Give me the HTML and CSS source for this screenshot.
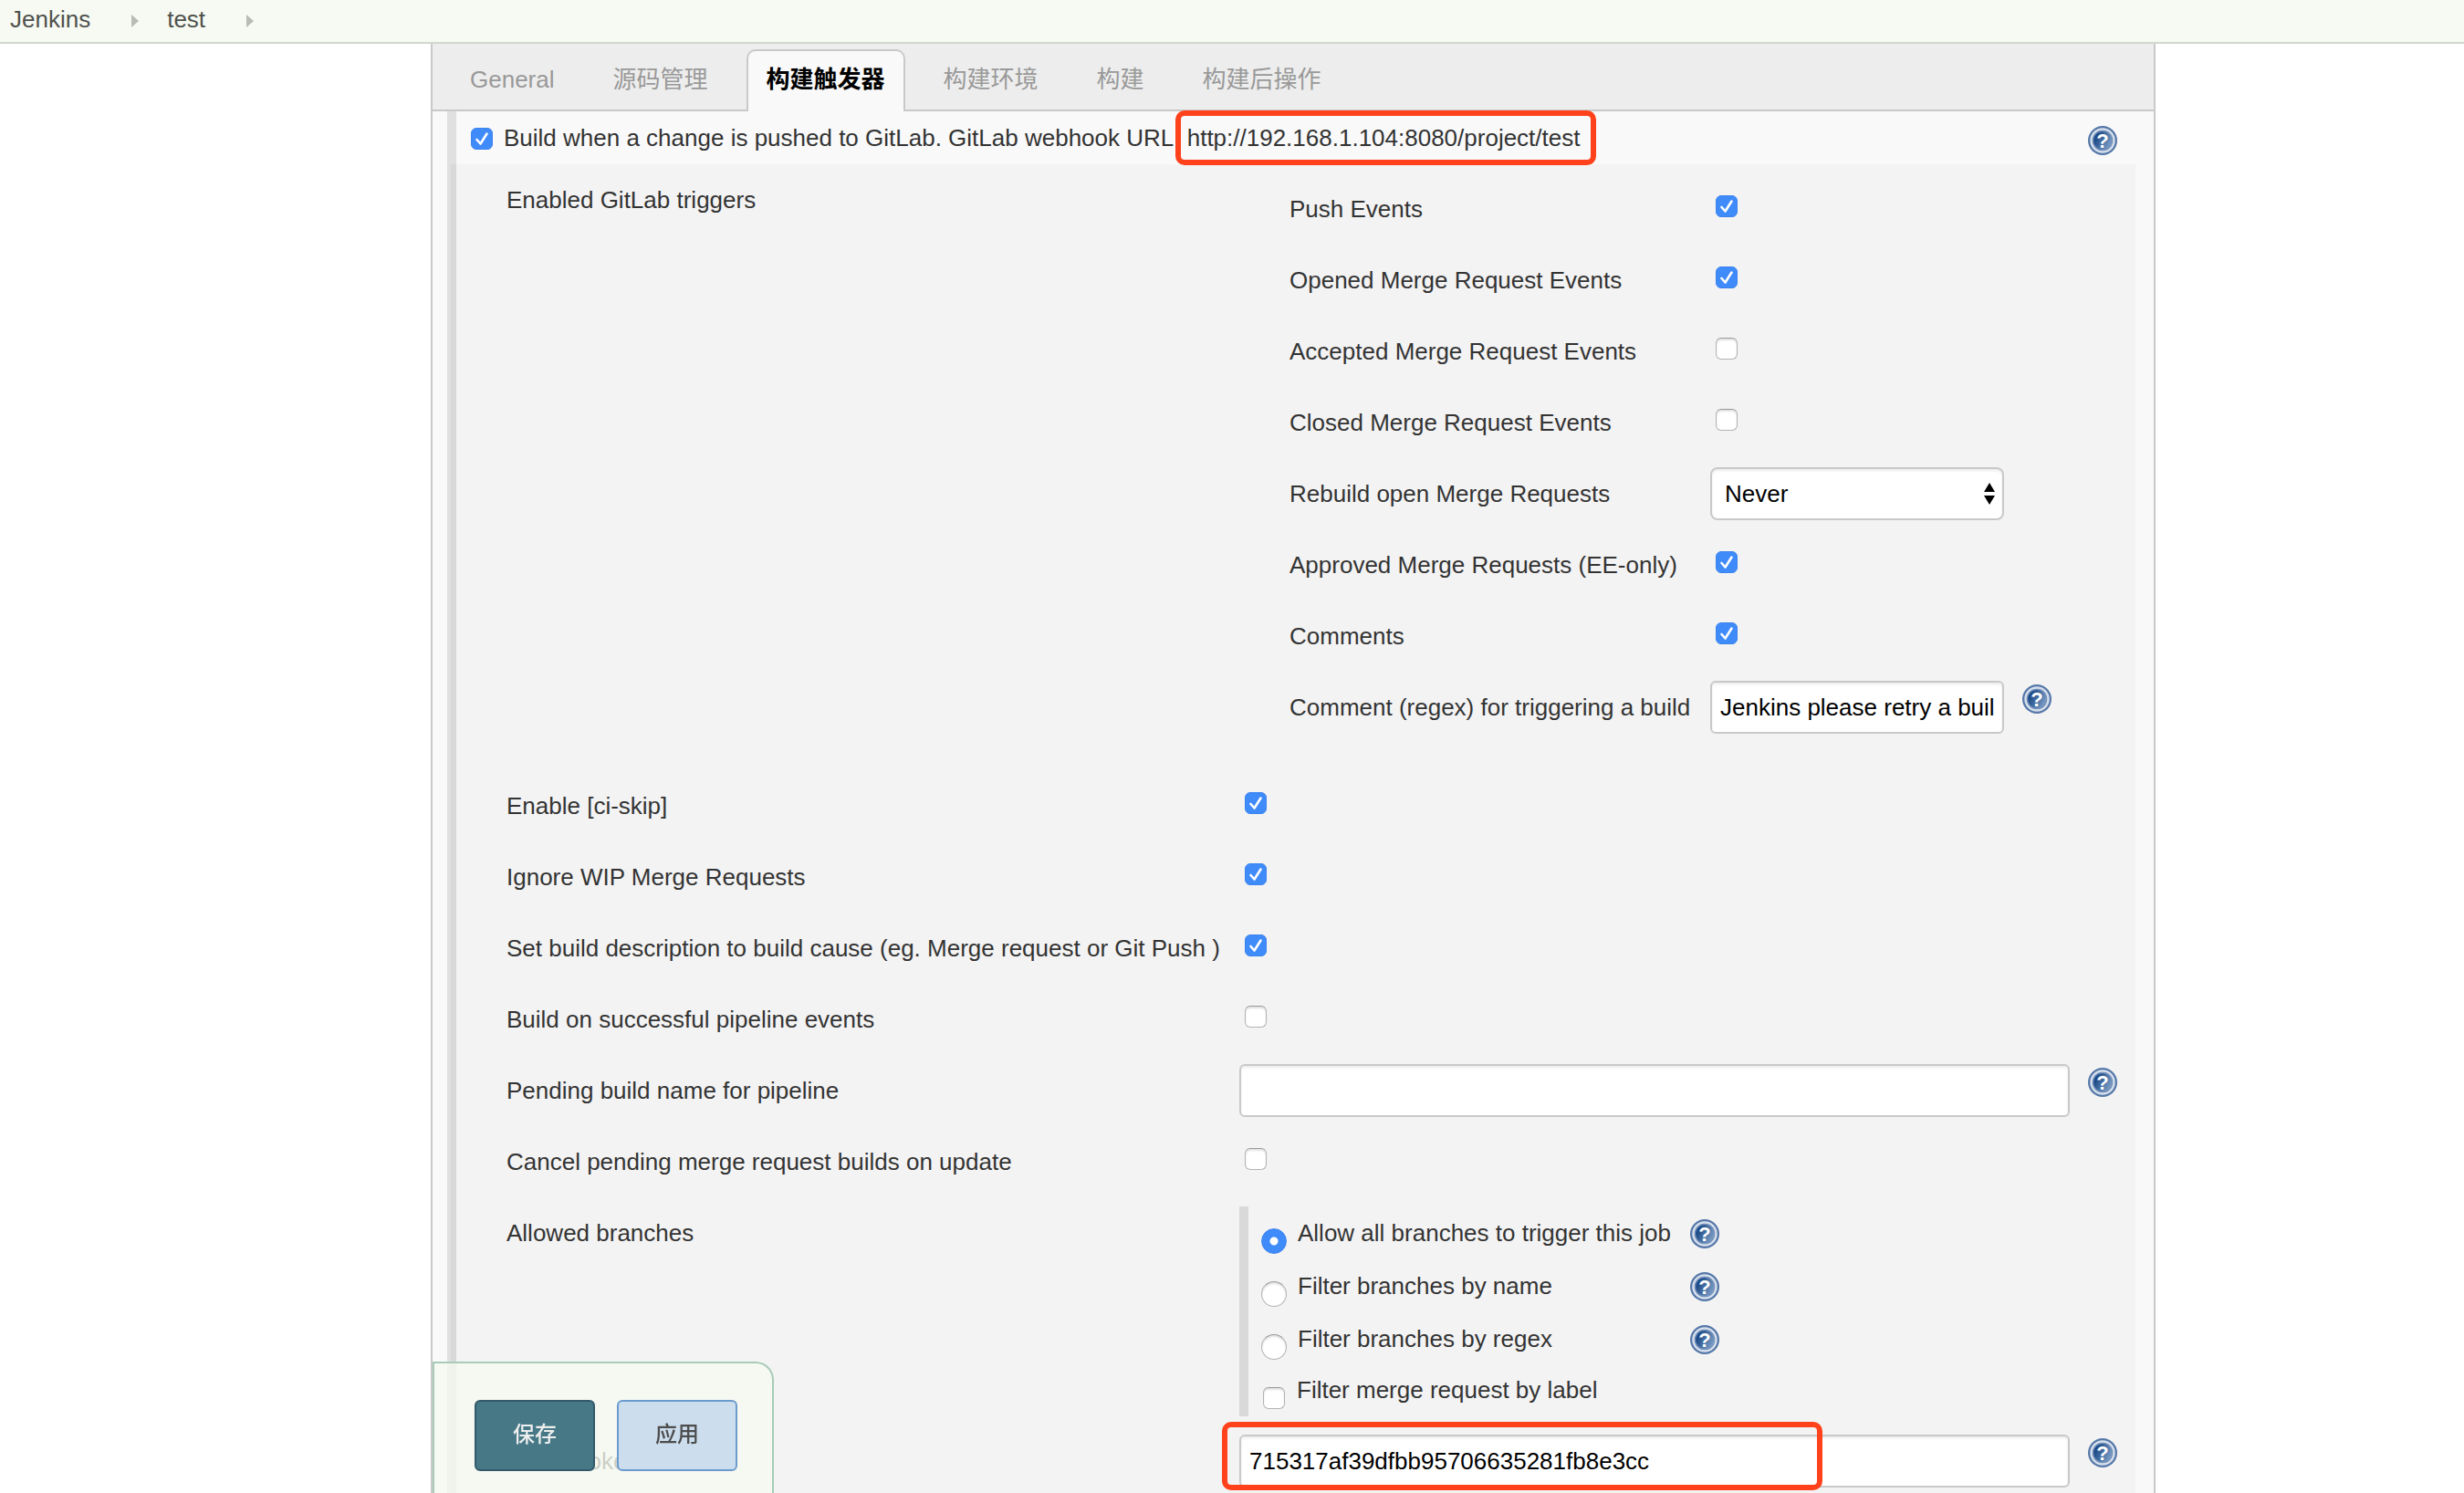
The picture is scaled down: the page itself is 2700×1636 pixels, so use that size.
FILE: index.html
```html
<!DOCTYPE html>
<html lang="zh-CN">
<head>
<meta charset="utf-8">
<title>test Config [Jenkins]</title>
<link rel="stylesheet" href="styles.css">
</head>
<body>
<svg class="defs" aria-hidden="true">
  <defs>
    <linearGradient id="disc" x1="0" y1="0.3" x2="1" y2="0.8">
      <stop offset="0.15" stop-color="#1f4c88"/>
      <stop offset="1" stop-color="#84a5cd"/>
    </linearGradient>
    <symbol id="help" viewBox="0 0 32 32">
      <circle cx="16" cy="16" r="16" fill="#5577a8"/>
      <circle cx="16" cy="16" r="12.500" fill="none" stroke="#d5dfec" stroke-width="2.500"/>
      <circle cx="16" cy="16" r="10.500" fill="url(#disc)" stroke="#7f9ac0" stroke-width="1"/>
      <text x="16" y="24" text-anchor="middle" class="help-mark">?</text>
    </symbol>
    <symbol id="crumb" viewBox="0 0 8 14"><path d="M0 0L8 7L0 14Z" fill="#b9bbb6"/></symbol>
  </defs>
</svg>

<nav class="breadcrumbs">
  <a href="#">Jenkins</a>
  <svg class="crumb"><use href="#crumb"/></svg>
  <a href="#">test</a>
  <svg class="crumb"><use href="#crumb"/></svg>
</nav>

<main class="config">
  <div class="tabs">
    <a class="tab" href="#">General</a>
    <a class="tab" href="#">源码管理</a>
    <a class="tab active" href="#">构建触发器</a>
    <a class="tab" href="#">构建环境</a>
    <a class="tab" href="#">构建</a>
    <a class="tab" href="#">构建后操作</a>
  </div>

  <form class="section">
    <div class="head">
      <input type="checkbox" id="gitlab" checked>
      <label for="gitlab">Build when a change is pushed to GitLab. GitLab webhook URL: <span class="url">http://192.168.1.104:8080/project/test</span></label>
      <button type="button" class="help" aria-label="Help"><svg><use href="#help"/></svg></button>
    </div>

    <div class="body">
      <div class="row triggers-row">
        <span class="label">Enabled GitLab triggers</span>
        <div class="triggers">
          <div class="trigger"><label for="push">Push Events</label><input type="checkbox" id="push" checked></div>
          <div class="trigger"><label for="opened">Opened Merge Request Events</label><input type="checkbox" id="opened" checked></div>
          <div class="trigger"><label for="accepted">Accepted Merge Request Events</label><input type="checkbox" id="accepted"></div>
          <div class="trigger"><label for="closed">Closed Merge Request Events</label><input type="checkbox" id="closed"></div>
          <div class="trigger">
            <label for="rebuild">Rebuild open Merge Requests</label>
            <div class="select">
              <select id="rebuild"><option>Never</option></select>
              <svg class="arrows" viewBox="0 0 12 24"><path d="M6 0L12 10H0ZM0 14H12L6 24Z"/></svg>
            </div>
          </div>
          <div class="trigger"><label for="approved">Approved Merge Requests (EE-only)</label><input type="checkbox" id="approved" checked></div>
          <div class="trigger"><label for="comments">Comments</label><input type="checkbox" id="comments" checked></div>
          <div class="trigger">
            <label for="regex">Comment (regex) for triggering a build</label>
            <input type="text" id="regex" value="Jenkins please retry a build">
            <button type="button" class="help" aria-label="Help"><svg><use href="#help"/></svg></button>
          </div>
        </div>
      </div>

      <div class="row"><label for="ciskip">Enable [ci-skip]</label><input type="checkbox" id="ciskip" checked></div>
      <div class="row"><label for="wip">Ignore WIP Merge Requests</label><input type="checkbox" id="wip" checked></div>
      <div class="row"><label for="cause">Set build description to build cause (eg. Merge request or Git Push )</label><input type="checkbox" id="cause" checked></div>
      <div class="row"><label for="pipeline">Build on successful pipeline events</label><input type="checkbox" id="pipeline"></div>
      <div class="row">
        <label for="pending">Pending build name for pipeline</label>
        <div class="field"><input type="text" id="pending"></div>
        <button type="button" class="help" aria-label="Help"><svg><use href="#help"/></svg></button>
      </div>
      <div class="row"><label for="cancel">Cancel pending merge request builds on update</label><input type="checkbox" id="cancel"></div>

      <div class="row branches-row">
        <span class="label">Allowed branches</span>
        <div class="branches">
          <div class="branch">
            <input type="radio" name="branch" id="all" checked><label for="all">Allow all branches to trigger this job</label>
            <button type="button" class="help" aria-label="Help"><svg><use href="#help"/></svg></button>
          </div>
          <div class="branch">
            <input type="radio" name="branch" id="byname"><label for="byname">Filter branches by name</label>
            <button type="button" class="help" aria-label="Help"><svg><use href="#help"/></svg></button>
          </div>
          <div class="branch">
            <input type="radio" name="branch" id="byregex"><label for="byregex">Filter branches by regex</label>
            <button type="button" class="help" aria-label="Help"><svg><use href="#help"/></svg></button>
          </div>
          <div class="branch merge">
            <input type="checkbox" id="bylabel"><label for="bylabel">Filter merge request by label</label>
          </div>
        </div>
      </div>

      <div class="row">
        <label for="token">Secret token</label>
        <div class="field marked"><input type="text" id="token" value="715317af39dfbb95706635281fb8e3cc"></div>
        <button type="button" class="help" aria-label="Help"><svg><use href="#help"/></svg></button>
      </div>
    </div>
  </form>

  <div class="actions">
    <button type="submit" class="btn save">保存</button>
    <button type="button" class="btn apply">应用</button>
  </div>
</main>
</body>
</html>
```

FILE: styles.css
```css
*,
*::after {
  box-sizing: border-box;
}

body {
  margin: 0;
  height: 100vh;
  display: flex;
  flex-direction: column;
  background: #fff;
  color: #333;
  font: 26px/30px "Liberation Sans", "Noto Sans CJK SC", sans-serif;
}

input,
select,
button {
  margin: 0;
  font: inherit;
}

a {
  text-decoration: none;
}

.defs {
  position: absolute;
  width: 0;
  height: 0;
}

/* Breadcrumb bar */
.breadcrumbs {
  display: flex;
  align-items: center;
  height: 48px;
  flex: none;
  padding-left: 11px;
  background: #f6faf2;
  border-bottom: 2px solid #d3d6cf;
}

.breadcrumbs a {
  color: #4f514d;
  margin-top: -4px;
}

.crumb {
  width: 8px;
  height: 14px;
  margin: 0 31px 0 45px;
}

/* Configuration panel */
.config {
  flex: 1;
  min-height: 0;
  margin: 0 338px 0 472px;
  overflow-y: auto;
  scrollbar-width: none;
  background: #f9f9f9;
  border: solid #c9c9c9;
  border-width: 0 2px;
}

.tabs {
  display: flex;
  align-items: flex-end;
  gap: 20px;
  height: 74px;
  padding-left: 19px;
  background: #ededed;
  border-bottom: 2px solid #c9c9c9;
}

.tab {
  height: 68px;
  margin-bottom: -2px;
  padding: 0 20px;
  border: 2px solid transparent;
  border-bottom: 0;
  border-radius: 10px 10px 0 0;
  line-height: 62px;
  color: #999;
}

.tab.active {
  background: #f9f9f9;
  border-color: #c9c9c9;
  color: #000;
  font-weight: bold;
}

.section {
  margin: 0 20px 0 16px;
  border-left: 4px solid #e0e0e0;
}

.head {
  display: flex;
  align-items: center;
  height: 58px;
  padding: 0 20px 0 16px;
  border-left: 6px solid #e0e0e0;
}

.head input {
  margin-top: 2px;
}

.head label {
  margin-left: 12px;
  line-height: 58px;
}

.head .help {
  margin: 6px 0 0 auto;
}

.url {
  display: inline-block;
  position: relative;
}

.url::after,
.marked::after {
  content: "";
  position: absolute;
  border: 6px solid #ff421c;
  border-radius: 10px;
  pointer-events: none;
}

.url::after {
  inset: -1px -18px -1px -13px;
}

.body {
  padding: 0 20px 0 55px;
  background: #f3f3f3;
  border-left: 6px solid #d8d8d8;
}

.row {
  display: grid;
  grid-template-columns: 803fr 930fr 32px;
  align-items: center;
  min-height: 78px;
}

.row > .help,
.trigger > .help {
  align-self: start;
  margin-top: 14px;
}

.label {
  align-self: start;
  line-height: 78px;
}

.row > input[type="checkbox"],
.trigger > input[type="checkbox"] {
  margin: 0 0 6px 6px;
}

.triggers {
  align-self: start;
  padding: 10px 0 30px 55px;
}

.trigger {
  display: grid;
  grid-template-columns: 461px 322px 52px;
  align-items: center;
  height: 78px;
}

.trigger > .help {
  margin-left: 20px;
}

.field {
  position: relative;
  margin-right: 20px;
}

.marked::after {
  top: -14px;
  bottom: -3px;
  left: -19px;
  width: 658px;
}

/* Controls */
input[type="text"],
select {
  display: block;
  width: 100%;
  height: 58px;
  padding: 0 9px;
  background: #fff;
  border: 2px solid #c9c9c9;
  border-radius: 6px;
  box-shadow: inset 0 2px 3px rgba(0, 0, 0, 0.08);
  color: #000;
}

select {
  appearance: none;
  padding: 0 14px;
  border-radius: 8px;
}

.select {
  position: relative;
}

.arrows {
  position: absolute;
  top: 17px;
  right: 10px;
  width: 12px;
  height: 24px;
  pointer-events: none;
}

input[type="checkbox"],
input[type="radio"] {
  appearance: none;
  flex: none;
  width: 24px;
  height: 24px;
  background: #fff;
  border: 1px solid #b3b3b3;
  border-top-color: #999;
  border-radius: 6px;
  box-shadow: inset 0 2px 2px rgba(0, 0, 0, 0.12);
}

input[type="radio"] {
  width: 28px;
  height: 28px;
  border-radius: 50%;
}

input[type="checkbox"]:checked {
  background: #3f8bfa url("data:image/svg+xml,%3Csvg xmlns='http://www.w3.org/2000/svg' viewBox='0 0 24 24'%3E%3Cpath d='M6.500 13L10.500 17.500L17.500 6.500' fill='none' stroke='%23fff' stroke-width='2.600' stroke-linecap='round' stroke-linejoin='round'/%3E%3C/svg%3E") center / 24px 24px;
  border-color: #3c84ee;
  box-shadow: none;
}

input[type="radio"]:checked {
  background: radial-gradient(circle, #fff 4px, #3f8bfa 5px);
  border-color: #3c84ee;
  box-shadow: none;
}

.help {
  flex: none;
  width: 32px;
  height: 32px;
  padding: 0;
  background: none;
  border: 0;
}

.help svg {
  display: block;
  width: 32px;
  height: 32px;
}

.help-mark {
  font: bold 22px "Liberation Sans", sans-serif;
  fill: #fff;
}

/* Allowed branches */
.branches {
  justify-self: start;
  margin: 10px 0;
  padding: 0 0 2px 14px;
  border-left: 10px solid #d9d9d9;
}

.branch {
  display: grid;
  grid-template-columns: 40px 430px 32px;
  align-items: center;
  height: 58px;
}

.branch input {
  margin-top: 18px;
}

.branch .help {
  margin-top: 2px;
}

.merge {
  grid-template-columns: 39px 430px;
  height: 54px;
}

.merge input {
  margin-left: 2px;
}

/* Floating save bar */
.actions {
  position: fixed;
  bottom: 0;
  left: 474px;
  display: flex;
  gap: 24px;
  padding: 40px 38px 24px 44px;
  background: rgba(246, 250, 240, 0.78);
  border: 2px solid #a9cbb9;
  border-bottom: 0;
  border-radius: 0 20px 0 0;
}

.btn {
  width: 132px;
  height: 78px;
  padding: 0 0 2px;
  border: 2px solid #335a6b;
  border-radius: 6px;
  background: #467886;
  color: #eee;
  font-size: 24px;
  font-weight: 500;
}

.apply {
  background: #ccdded;
  border-color: #6b9bcd;
  color: #4d4d4d;
}
```
